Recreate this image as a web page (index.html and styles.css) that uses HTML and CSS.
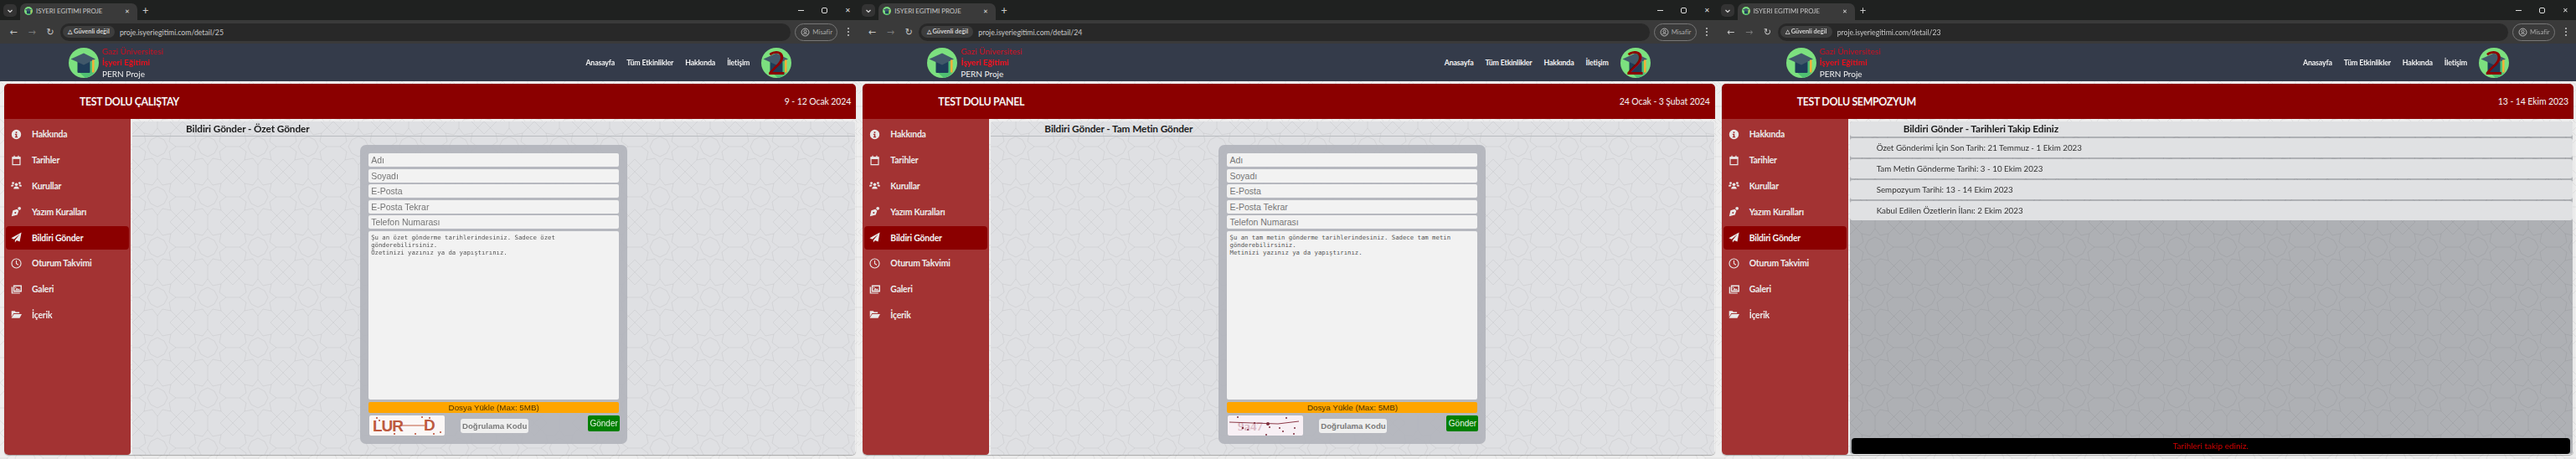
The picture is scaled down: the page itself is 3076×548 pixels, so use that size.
FILE: index.html
```html
<!DOCTYPE html>
<html lang="tr">
<head>
<meta charset="utf-8">
<title>ISYERI EGITIMI PROJE</title>
<link rel="stylesheet" href="styles.css">
</head>
<body>
<svg class="defs" width="0" height="0" aria-hidden="true">
  <symbol id="logo" viewBox="0 0 36 36">
    <circle cx="18" cy="18" r="18" fill="#7ce07f"/>
    <path d="M29 15 31 29A18 18 0 0 1 20 36L10 27Z" fill="#4fbf72"/>
    <rect x="10.500" y="15" width="15" height="15" rx="1" fill="#1f3c58"/>
    <path d="M2.500 13.500 18 6.500 32 13.500 18 20.500Z" fill="#41586a"/>
    <rect x="28" y="14.500" width="2.600" height="15" fill="#f2b23a"/>
  </symbol>
  <symbol id="i-info" viewBox="0 0 16 16"><path fill-rule="evenodd" d="M8 1a7 7 0 1 1 0 14A7 7 0 0 1 8 1ZM7 4h2v2H7Zm-1 3h3v4h1v1.500H6V11h1V8.500H6Z"/></symbol>
  <symbol id="i-cal" viewBox="0 0 16 16"><path fill="none" stroke="currentColor" stroke-width="1.500" d="M2.500 3.500h11v10.700h-11ZM5 .8v3M11 .8v3"/><path d="M2 3h12v3H2Z"/></symbol>
  <symbol id="i-users" viewBox="0 0 20 16"><circle cx="10" cy="6" r="2.800"/><circle cx="4" cy="3.500" r="2.200"/><circle cx="16" cy="3.500" r="2.200"/><path d="M5 14c0-3 2-4.500 5-4.500s5 1.500 5 4.500ZM0 9.500C0 7 1.500 6.500 4 6.500c.7 0 1.200.4 1.600.8-1 .8-1.600 1.500-1.800 2.700ZM20 9.500C20 7 18.500 6.500 16 6.500c-.7 0-1.200.4-1.600.8 1 .8 1.600 1.500 1.800 2.700Z"/></symbol>
  <symbol id="i-pen" viewBox="0 0 16 16"><path fill-rule="evenodd" d="M1 15 3 6.500 9 4.500 11.500 7 9.500 13ZM6.500 8.500a1.200 1.200 0 1 0 .1 0L2.500 13.500Z"/><circle cx="12.500" cy="3.500" r="2.300"/></symbol>
  <symbol id="i-plane" viewBox="0 0 16 16"><path d="M15.500.5 13 14 8.500 12.200 6 15.500V12L13 3.500 4.500 10.800.5 9Z"/></symbol>
  <symbol id="i-clock" viewBox="0 0 16 16"><circle cx="8" cy="8" r="6.800" fill="none" stroke="currentColor" stroke-width="1.400"/><path fill="none" stroke="currentColor" stroke-width="1.400" d="M8 3.800V8.300L11 10.200"/></symbol>
  <symbol id="i-images" viewBox="0 0 18 16"><path fill-rule="evenodd" d="M4 1h14v11H4ZM6 3v7h10V3Z"/><path d="M7 9.500 10 5.500 12 8 13.300 6.500 15.500 9.500Z"/><circle cx="8" cy="4.800" r="1"/><path d="M1 4h2v9.500h12V15H1Z"/></symbol>
  <symbol id="i-folder" viewBox="0 0 18 16"><path d="M1 2h5.500L8 4h6v2H4.500L1 12Z"/><path d="M5 7.200h13L14.500 14H.8Z"/></symbol>
</svg>

<main class="screen">

  <section class="window">
    <div class="tabbar">
      <span class="tab-menu"><svg class="chev" viewBox="0 0 8 8"><path d="M1.500 3 4 5.500 6.500 3"/></svg></span>
      <div class="tab"><svg class="favicon"><use href="#logo"/></svg><span class="tab-title">ISYERI EGITIMI PROJE</span><span class="tab-x">&#10005;</span></div>
      <span class="tab-plus">+</span>
      <div class="win-controls"><span class="wc-min"></span><span class="wc-max"></span><span class="wc-x">&#10005;</span></div>
    </div>
    <div class="toolbar">
      <span class="nav-arrow">&#8592;</span><span class="nav-arrow off">&#8594;</span><span class="nav-arrow reload">&#8635;</span>
      <div class="omnibox"><span class="chip">&#9651; Güvenli değil</span><span class="url">proje.isyeriegitimi.com/detail/25</span></div>
      <div class="guest"><svg class="guest-icon" viewBox="0 0 16 16"><circle cx="8" cy="8" r="6.500"/><circle cx="8" cy="6.500" r="2.300"/><path d="M3.500 12.500c1-3 8-3 9 0"/></svg>Misafir</div>
      <span class="kebab"><i></i><i></i><i></i></span>
    </div>
    <header class="site-head">
      <svg class="logo"><use href="#logo"/></svg>
      <div class="brand"><span class="b1">Gazi Üniversitesi</span><span class="b2">İşyeri Eğitimi</span><span class="b3">PERN Proje</span></div>
      <nav class="site-nav"><a>Anasayfa</a><a>Tüm Etkinlikler</a><a>Hakkında</a><a>İletişim</a></nav>
      <div class="avatar"><svg class="logo"><use href="#logo"/></svg><span class="avatar-num">2</span></div>
    </header>
    <div class="page">
      <div class="card">
        <div class="card-head"><h1>TEST DOLU ÇALIŞTAY</h1><span class="date">9 - 12 Ocak 2024</span></div>
        <div class="card-body">
          <aside class="side">
            <a class="side-item"><svg class="si"><use href="#i-info"/></svg>Hakkında</a>
            <a class="side-item"><svg class="si"><use href="#i-cal"/></svg>Tarihler</a>
            <a class="side-item"><svg class="si"><use href="#i-users"/></svg>Kurullar</a>
            <a class="side-item"><svg class="si"><use href="#i-pen"/></svg>Yazım Kuralları</a>
            <a class="side-item active"><svg class="si"><use href="#i-plane"/></svg>Bildiri Gönder</a>
            <a class="side-item"><svg class="si"><use href="#i-clock"/></svg>Oturum Takvimi</a>
            <a class="side-item"><svg class="si"><use href="#i-images"/></svg>Galeri</a>
            <a class="side-item"><svg class="si"><use href="#i-folder"/></svg>İçerik</a>
          </aside>
          <div class="content">
            <h2 class="content-title">Bildiri Gönder - Özet Gönder</h2>
            <form class="paper-form">
              <div class="field">Adı</div><div class="field">Soyadı</div><div class="field">E-Posta</div><div class="field">E-Posta Tekrar</div><div class="field">Telefon Numarası</div>
              <div class="area">Şu an özet gönderme tarihlerindesiniz. Sadece özet<br>gönderebilirsiniz.<br>Özetinizi yazınız ya da yapıştırınız.</div>
              <div class="upload">Dosya Yükle (Max: 5MB)</div>
              <div class="form-foot">
                <svg class="captcha" viewBox="0 0 90 24">
                  <rect width="90" height="24" fill="#fbf7f6"/>
                  <text class="captcha-a" x="4" y="19">LUR</text><text class="captcha-a" x="65" y="18">D</text>
                  <path d="M36 12H66" stroke="#c0583c" fill="none"/>
                  <g fill="#b8462c"><circle cx="9" cy="3" r="1"/><circle cx="12" cy="6" r="1"/><circle cx="63" cy="2" r="1"/><circle cx="72" cy="3" r="1"/><circle cx="55" cy="22" r="1"/><circle cx="77" cy="22" r="1"/><circle cx="85" cy="20" r="1"/><circle cx="30" cy="22" r="1"/></g>
                </svg>
                <div class="code">Doğrulama Kodu</div>
                <button class="send" type="button">Gönder</button>
              </div>
            </form>
          </div>
        </div>
      </div>
    </div>
  </section>

  <section class="window">
    <div class="tabbar">
      <span class="tab-menu"><svg class="chev" viewBox="0 0 8 8"><path d="M1.500 3 4 5.500 6.500 3"/></svg></span>
      <div class="tab"><svg class="favicon"><use href="#logo"/></svg><span class="tab-title">ISYERI EGITIMI PROJE</span><span class="tab-x">&#10005;</span></div>
      <span class="tab-plus">+</span>
      <div class="win-controls"><span class="wc-min"></span><span class="wc-max"></span><span class="wc-x">&#10005;</span></div>
    </div>
    <div class="toolbar">
      <span class="nav-arrow">&#8592;</span><span class="nav-arrow off">&#8594;</span><span class="nav-arrow reload">&#8635;</span>
      <div class="omnibox"><span class="chip">&#9651; Güvenli değil</span><span class="url">proje.isyeriegitimi.com/detail/24</span></div>
      <div class="guest"><svg class="guest-icon" viewBox="0 0 16 16"><circle cx="8" cy="8" r="6.500"/><circle cx="8" cy="6.500" r="2.300"/><path d="M3.500 12.500c1-3 8-3 9 0"/></svg>Misafir</div>
      <span class="kebab"><i></i><i></i><i></i></span>
    </div>
    <header class="site-head">
      <svg class="logo"><use href="#logo"/></svg>
      <div class="brand"><span class="b1">Gazi Üniversitesi</span><span class="b2">İşyeri Eğitimi</span><span class="b3">PERN Proje</span></div>
      <nav class="site-nav"><a>Anasayfa</a><a>Tüm Etkinlikler</a><a>Hakkında</a><a>İletişim</a></nav>
      <div class="avatar"><svg class="logo"><use href="#logo"/></svg><span class="avatar-num">2</span></div>
    </header>
    <div class="page">
      <div class="card">
        <div class="card-head"><h1>TEST DOLU PANEL</h1><span class="date">24 Ocak - 3 Şubat 2024</span></div>
        <div class="card-body">
          <aside class="side">
            <a class="side-item"><svg class="si"><use href="#i-info"/></svg>Hakkında</a>
            <a class="side-item"><svg class="si"><use href="#i-cal"/></svg>Tarihler</a>
            <a class="side-item"><svg class="si"><use href="#i-users"/></svg>Kurullar</a>
            <a class="side-item"><svg class="si"><use href="#i-pen"/></svg>Yazım Kuralları</a>
            <a class="side-item active"><svg class="si"><use href="#i-plane"/></svg>Bildiri Gönder</a>
            <a class="side-item"><svg class="si"><use href="#i-clock"/></svg>Oturum Takvimi</a>
            <a class="side-item"><svg class="si"><use href="#i-images"/></svg>Galeri</a>
            <a class="side-item"><svg class="si"><use href="#i-folder"/></svg>İçerik</a>
          </aside>
          <div class="content">
            <h2 class="content-title">Bildiri Gönder - Tam Metin Gönder</h2>
            <form class="paper-form">
              <div class="field">Adı</div><div class="field">Soyadı</div><div class="field">E-Posta</div><div class="field">E-Posta Tekrar</div><div class="field">Telefon Numarası</div>
              <div class="area">Şu an tam metin gönderme tarihlerindesiniz. Sadece tam metin<br>gönderebilirsiniz.<br>Metinizi yazınız ya da yapıştırınız.</div>
              <div class="upload">Dosya Yükle (Max: 5MB)</div>
              <div class="form-foot">
                <svg class="captcha" viewBox="0 0 90 24">
                  <rect width="90" height="24" fill="#f8f0f5"/>
                  <text class="captcha-b" x="12" y="18">9a47</text>
                  <path d="M2 8 30 9 60 10 85 7" stroke="#8c3a48" fill="none"/>
                  <g fill="#7d2a3a"><circle cx="12" cy="2" r="1"/><circle cx="18" cy="15" r="1.200"/><circle cx="24" cy="17" r="1"/><circle cx="32" cy="9" r="1"/><circle cx="48" cy="10" r="2"/><circle cx="50" cy="14" r="1"/><circle cx="62" cy="15" r="1"/><circle cx="66" cy="19" r="1"/><circle cx="80" cy="15" r="1"/><circle cx="79" cy="22" r="1"/><circle cx="46" cy="23" r="1"/><circle cx="70" cy="3" r="1"/></g>
                </svg>
                <div class="code">Doğrulama Kodu</div>
                <button class="send" type="button">Gönder</button>
              </div>
            </form>
          </div>
        </div>
      </div>
    </div>
  </section>

  <section class="window">
    <div class="tabbar">
      <span class="tab-menu"><svg class="chev" viewBox="0 0 8 8"><path d="M1.500 3 4 5.500 6.500 3"/></svg></span>
      <div class="tab"><svg class="favicon"><use href="#logo"/></svg><span class="tab-title">ISYERI EGITIMI PROJE</span><span class="tab-x">&#10005;</span></div>
      <span class="tab-plus">+</span>
      <div class="win-controls"><span class="wc-min"></span><span class="wc-max"></span><span class="wc-x">&#10005;</span></div>
    </div>
    <div class="toolbar">
      <span class="nav-arrow">&#8592;</span><span class="nav-arrow off">&#8594;</span><span class="nav-arrow reload">&#8635;</span>
      <div class="omnibox"><span class="chip">&#9651; Güvenli değil</span><span class="url">proje.isyeriegitimi.com/detail/23</span></div>
      <div class="guest"><svg class="guest-icon" viewBox="0 0 16 16"><circle cx="8" cy="8" r="6.500"/><circle cx="8" cy="6.500" r="2.300"/><path d="M3.500 12.500c1-3 8-3 9 0"/></svg>Misafir</div>
      <span class="kebab"><i></i><i></i><i></i></span>
    </div>
    <header class="site-head">
      <svg class="logo"><use href="#logo"/></svg>
      <div class="brand"><span class="b1">Gazi Üniversitesi</span><span class="b2">İşyeri Eğitimi</span><span class="b3">PERN Proje</span></div>
      <nav class="site-nav"><a>Anasayfa</a><a>Tüm Etkinlikler</a><a>Hakkında</a><a>İletişim</a></nav>
      <div class="avatar"><svg class="logo"><use href="#logo"/></svg><span class="avatar-num">2</span></div>
    </header>
    <div class="page">
      <div class="card">
        <div class="card-head"><h1>TEST DOLU SEMPOZYUM</h1><span class="date">13 - 14 Ekim 2023</span></div>
        <div class="card-body">
          <aside class="side">
            <a class="side-item"><svg class="si"><use href="#i-info"/></svg>Hakkında</a>
            <a class="side-item"><svg class="si"><use href="#i-cal"/></svg>Tarihler</a>
            <a class="side-item"><svg class="si"><use href="#i-users"/></svg>Kurullar</a>
            <a class="side-item"><svg class="si"><use href="#i-pen"/></svg>Yazım Kuralları</a>
            <a class="side-item active"><svg class="si"><use href="#i-plane"/></svg>Bildiri Gönder</a>
            <a class="side-item"><svg class="si"><use href="#i-clock"/></svg>Oturum Takvimi</a>
            <a class="side-item"><svg class="si"><use href="#i-images"/></svg>Galeri</a>
            <a class="side-item"><svg class="si"><use href="#i-folder"/></svg>İçerik</a>
          </aside>
          <div class="content grey">
            <h2 class="content-title boxed">Bildiri Gönder - Tarihleri Takip Ediniz</h2>
            <ul class="dates">
              <li>Özet Gönderimi İçin Son Tarih: 21 Temmuz - 1 Ekim 2023</li>
              <li>Tam Metin Gönderme Tarihi: 3 - 10 Ekim 2023</li>
              <li>Sempozyum Tarihi: 13 - 14 Ekim 2023</li>
              <li>Kabul Edilen Özetlerin İlanı: 2 Ekim 2023</li>
            </ul>
            <div class="notice">Tarihleri takip ediniz.</div>
          </div>
        </div>
      </div>
    </div>
  </section>

</main>
</body>
</html>
```
FILE: styles.css
```css
:root { --pattern: url("data:image/svg+xml,%3Csvg xmlns='http://www.w3.org/2000/svg' width='60' height='60' viewBox='0 0 60 60'%3E%3Cg fill='none' stroke='%23000' stroke-opacity='.07' stroke-width='.8'%3E%3Cpath d='M30 8 36 16 46 14 44 24 52 30 44 36 46 46 36 44 30 52 24 44 14 46 16 36 8 30 16 24 14 14 24 16Z'/%3E%3Cpath d='M30 18 38 22 42 30 38 38 30 42 22 38 18 30 22 22Z'/%3E%3Cpath d='M30 8V0M30 52V60M8 30H0M52 30H60M14 14 0 0M46 14 60 0M14 46 0 60M46 46 60 60M0 15 15 0M45 0 60 15M0 45 15 60M45 60 60 45'/%3E%3C/g%3E%3C/svg%3E"); }
* { box-sizing: border-box; }
html, body { margin: 0; height: 548px; overflow: hidden; }
body { font-family: Lato, "Open Sans", sans-serif; background: #ececec; }
.defs { position: absolute; }
a { color: inherit; text-decoration: none; }

.screen { display: grid; grid-template-columns: repeat(3, 1fr); height: 548px; filter: blur(.35px); }
.window { display: flex; flex-direction: column; min-width: 0; height: 548px; }

/* browser chrome */
.tabbar { height: 24px; background: #1f2120; display: flex; align-items: flex-end; color: #d0d0d0; }
.tab-menu { width: 16px; height: 15px; margin: 0 4px 4px 4px; background: #333; border-radius: 5px; display: flex; align-items: center; justify-content: center; }
.chev { width: 8px; height: 8px; fill: none; stroke: #ddd; stroke-width: 1.200; }
.tab { width: 140px; height: 20px; background: #3a3a3a; border-radius: 7px 7px 0 0; display: flex; align-items: center; padding: 0 6px 2px 5px; }
.favicon { width: 10px; height: 10px; flex: none; }
.tab-title { font-size: 7.900px; color: #c9c9c9; margin-left: 4px; flex: 1; white-space: nowrap; }
.tab-x { font-size: 7px; color: #ddd; margin-right: 3px; }
.tab-plus { font-size: 13px; line-height: 20px; margin: 0 0 2px 6px; color: #ccc; }
.win-controls { margin-left: auto; height: 24px; display: flex; align-items: center; gap: 21px; padding-right: 9px; }
.wc-min { width: 7px; height: 1px; background: #ddd; }
.wc-max { width: 7px; height: 7px; border: 1px solid #ddd; border-radius: 2px; }
.wc-x { font-size: 8px; color: #ddd; }

.toolbar { height: 28px; background: #3a3a3a; display: flex; align-items: center; padding: 0 0 0 5px; color: #c7c7c7; }
.nav-arrow { width: 22px; text-align: center; font-size: 11px; font-family: "DejaVu Sans", sans-serif; color: #c6c6c6; }
.nav-arrow.off { color: #777; }
.omnibox { margin-left: 1px; flex: 1; height: 21px; background: #282828; border-radius: 11px; display: flex; align-items: center; padding-left: 3px; }
.chip { width: 62px; height: 14px; background: #3d3d3d; border-radius: 7px; text-align: center; font-weight: 700; font-size: 7.400px; line-height: 14px; color: #d5d5d5; white-space: nowrap; }
.url { font-size: 8.700px; color: #c8c8c8; margin-left: 6px; white-space: nowrap; }
.guest { width: 51px; height: 21px; margin-left: 5px; border: 1px solid #777; border-radius: 11px; display: flex; align-items: center; gap: 3px; padding-left: 6px; font-size: 7.800px; color: #a8a8a8; }
.guest-icon { width: 11px; height: 11px; flex: none; fill: none; stroke: #c8c8c8; stroke-width: 1.300; }
.kebab { width: 25px; display: flex; flex-direction: column; align-items: center; gap: 2px; }
.kebab i { width: 2px; height: 2px; background: #c7c7c7; border-radius: 50%; }

/* site header */
.site-head { height: 45px; background: #343b4a; display: flex; align-items: center; padding: 0 80px 0 82px; flex: none; }
.logo { width: 36px; height: 36px; display: block; }
.brand { margin-left: 4px; display: flex; flex-direction: column; font-size: 10px; line-height: 13.500px; white-space: nowrap; padding-top: 1px; }
.b1 { color: #d10f22; }
.b2 { color: #ee0f1c; font-weight: 700; }
.b3 { color: #f0f0f0; }
.site-nav { margin-left: auto; display: flex; gap: 14px; font-weight: 700; font-size: 8.800px; line-height: 12px; letter-spacing: -.15px; color: #f4f4f4; margin-right: 14px; white-space: nowrap; }
.avatar { position: relative; width: 36px; height: 36px; }
.avatar-num { position: absolute; left: 0; right: 0; top: -6px; text-align: center; color: #8b0000; font: 400 39px/46px "Open Sans", sans-serif; }

/* page */
.page { flex: 1; min-height: 0; padding: 3px 3px 5px 5px; background-color: #eeeeee; background-image: var(--pattern); }
.card { height: 100%; display: flex; flex-direction: column; border-radius: 5px; box-shadow: 0 1px 1px rgba(0,0,0,.3); overflow: hidden; }
.card-head { height: 42px; flex: none; background: #8b0000; display: flex; align-items: center; justify-content: space-between; padding: 0 6px 0 90px; color: #f5f5f5; }
.card-head h1 { margin: 0; font-size: 12.400px; font-weight: 700; letter-spacing: -.35px; white-space: nowrap; }
.date { font-size: 10.500px; letter-spacing: -.1px; }
.card-body { flex: 1; min-height: 0; display: flex; }

/* sidebar */
.side { width: 151px; flex: none; background: #a33333; padding: 3px 2px; display: flex; flex-direction: column; border-radius: 0 0 4px 4px; }
.side-item { height: 30.800px; flex: none; display: flex; align-items: center; padding-left: 6px; color: #ececec; font-size: 10.400px; font-weight: 700; letter-spacing: -.2px; white-space: nowrap; border-radius: 4px; }
.side-item.active { background: #8b0000; height: 28px; margin: 1.400px 0; color: #f3f3f3; }
.si { width: 13px; height: 13px; margin-right: 12px; fill: currentColor; color: #e8e8e8; flex: none; overflow: visible; }

/* content */
.content { flex: 1; min-width: 0; margin: 3px 1px 0 2px; background: #dfe0e3 var(--pattern); display: flex; flex-direction: column; align-items: center; border-radius: 3px 3px 0 0; }
.content-title { align-self: stretch; margin: 0; height: 18px; flex: none; padding-left: 64px; font-size: 11.800px; font-weight: 700; line-height: 17px; letter-spacing: -.1px; color: #1c1c1c; border-bottom: 1px solid #b9bcc0; white-space: nowrap; }

.paper-form { width: 319px; margin-top: 10px; padding: 10px; background: rgba(178,180,188,.92); border-radius: 7px; display: flex; flex-direction: column; }
.field { height: 16px; margin-bottom: 2.500px; padding-left: 3px; background: #f2f2f2; border-radius: 2px; font: 10.500px/16px "Liberation Sans", sans-serif; color: #757575; }
.area { height: 201px; padding: 3px; background: #f2f2f2; border-radius: 2px; font: 7.300px/9.100px "DejaVu Sans Mono", monospace; color: #555; white-space: nowrap; }
.upload { height: 13.500px; margin-top: 3px; background: #ffa500; border-radius: 2px; text-align: center; font: 9.800px/13.500px "Liberation Sans", sans-serif; color: #4a3100; }
.form-foot { height: 24px; margin-top: 3px; display: flex; align-items: center; }
.captcha { width: 90px; height: 24px; margin-left: 1px; border-radius: 2px; flex: none; }
.captcha-a { font: 700 19px "Liberation Sans", sans-serif; letter-spacing: -1px; fill: #bd5a3f; }
.captcha-b { font: 700 15px "Liberation Serif", serif; fill: #d9b8c4; }
.code { width: 81px; height: 17px; margin-left: 19px; background: #eeeeee; border-radius: 3px; text-align: center; font: 700 9.600px/17px "Liberation Sans", sans-serif; color: #7a7a7a; white-space: nowrap; }
.send { margin: -5px -1px 0 auto; width: 38px; height: 19px; padding: 0; border: 0; border-radius: 2px; background: #008000; color: #e9f2e9; font: 10px/19px "Liberation Sans", sans-serif; }

/* dates variant */
.content.grey { background: #aeb0b4 var(--pattern); align-items: stretch; border-radius: 3px; margin-bottom: 1px; }
.content-title.boxed { background: #e0e1e3; border-radius: 3px; border-bottom: 0; }
.dates { list-style: none; margin: 2px 0 0; padding: 0; display: flex; flex-direction: column; gap: 2px; }
.dates li { height: 23px; padding-left: 32px; background: #e0e1e3; border-radius: 3px; font-size: 9.800px; line-height: 23px; color: #333; white-space: nowrap; }
.notice { margin: auto 3px 0 2px; height: 19px; background: #000; border-radius: 4px; text-align: center; color: #d40000; font-size: 10px; line-height: 19px; }
```
